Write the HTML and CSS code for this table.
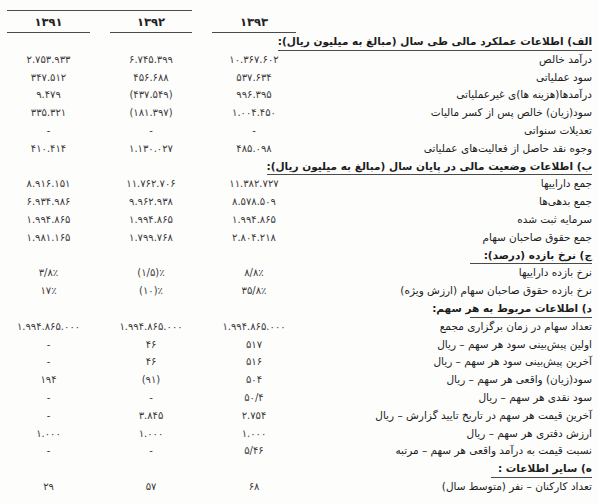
FILE: index.html
```html
<!DOCTYPE html>
<html lang="fa">
<head>
<meta charset="utf-8">
<title>خلاصه اطلاعات مالی</title>
<link rel="stylesheet" href="styles.css">
</head>
<body>
<main class="sheet" dir="rtl">
  <div class="years">
    <div class="topline"></div>
    <div class="year-spacer"></div>
    <div class="year">۱۳۹۳</div>
    <div class="year">۱۳۹۲</div>
    <div class="year">۱۳۹۱</div>
  </div>

  <div class="row sec sec-a"><div class="label">الف) اطلاعات عملکرد مالی طی سال (مبالغ به میلیون ریال):</div></div>
  <div class="row"><div class="label">درآمد خالص</div><div class="num">۱۰.۳۶۷.۶۰۲</div><div class="num">۶.۷۴۵.۳۹۹</div><div class="num">۲.۷۵۳.۹۳۳</div></div>
  <div class="row"><div class="label">سود عملیاتی</div><div class="num">۵۳۷.۶۳۴</div><div class="num">۴۵۶.۶۸۸</div><div class="num">۳۴۷.۵۱۲</div></div>
  <div class="row"><div class="label">درآمدها(هزینه ها)ی غیرعملیاتی</div><div class="num">۹۹۶.۳۹۵</div><div class="num">(۴۳۷.۵۴۹)</div><div class="num">۹.۴۷۹</div></div>
  <div class="row"><div class="label">سود(زیان) خالص پس از کسر مالیات</div><div class="num">۱.۰۰۴.۴۵۰</div><div class="num">(۱۸۱.۳۹۷)</div><div class="num">۳۳۵.۳۲۱</div></div>
  <div class="row"><div class="label">تعدیلات سنواتی</div><div class="num">-</div><div class="num">-</div><div class="num">-</div></div>
  <div class="row"><div class="label">وجوه نقد حاصل از فعالیت‌های عملیاتی</div><div class="num">۴۸۵.۰۹۸</div><div class="num">۱.۱۳۰.۰۲۷</div><div class="num">۴۱۰.۴۱۴</div></div>

  <div class="row sec sec-b"><div class="label">ب) اطلاعات وضعیت مالی در پایان سال (مبالغ به میلیون ریال):</div></div>
  <div class="row"><div class="label">جمع داراییها</div><div class="num">۱۱.۳۸۲.۷۲۷</div><div class="num">۱۱.۷۶۲.۷۰۶</div><div class="num">۸.۹۱۶.۱۵۱</div></div>
  <div class="row"><div class="label">جمع بدهی‌ها</div><div class="num">۸.۵۷۸.۵۰۹</div><div class="num">۹.۹۶۲.۹۳۸</div><div class="num">۶.۹۳۴.۹۸۶</div></div>
  <div class="row"><div class="label">سرمایه ثبت شده</div><div class="num">۱.۹۹۴.۸۶۵</div><div class="num">۱.۹۹۴.۸۶۵</div><div class="num">۱.۹۹۴.۸۶۵</div></div>
  <div class="row"><div class="label">جمع حقوق صاحبان سهام</div><div class="num">۲.۸۰۴.۲۱۸</div><div class="num">۱.۷۹۹.۷۶۸</div><div class="num">۱.۹۸۱.۱۶۵</div></div>

  <div class="row sec sec-c"><div class="label">ج) نرخ بازده (درصد):</div></div>
  <div class="row"><div class="label">نرخ بازده داراییها</div><div class="num">۸/۸٪</div><div class="num">(۱/۵)٪</div><div class="num">۳/۸٪</div></div>
  <div class="row"><div class="label">نرخ بازده حقوق صاحبان سهام (ارزش ویژه)</div><div class="num">۳۵/۸٪</div><div class="num">(۱۰)٪</div><div class="num">۱۷٪</div></div>

  <div class="row sec sec-c"><div class="label">د) اطلاعات مربوط به هر سهم:</div></div>
  <div class="row"><div class="label">تعداد سهام در زمان برگزاری مجمع</div><div class="num">۱.۹۹۴.۸۶۵.۰۰۰</div><div class="num">۱.۹۹۴.۸۶۵.۰۰۰</div><div class="num">۱.۹۹۴.۸۶۵.۰۰۰</div></div>
  <div class="row"><div class="label">اولین پیش‌بینی سود هر سهم – ریال</div><div class="num">۵۱۷</div><div class="num">۴۶</div><div class="num">-</div></div>
  <div class="row"><div class="label">آخرین پیش‌بینی سود هر سهم – ریال</div><div class="num">۵۱۶</div><div class="num">۴۶</div><div class="num">-</div></div>
  <div class="row"><div class="label">سود(زیان) واقعی هر سهم – ریال</div><div class="num">۵۰۴</div><div class="num">(۹۱)</div><div class="num">۱۹۴</div></div>
  <div class="row"><div class="label">سود نقدی هر سهم – ریال</div><div class="num">۵۰/۴</div><div class="num">-</div><div class="num">-</div></div>
  <div class="row"><div class="label">آخرین قیمت هر سهم در تاریخ تایید گزارش – ریال</div><div class="num">۲.۷۵۴</div><div class="num">۳.۸۴۵</div><div class="num">-</div></div>
  <div class="row"><div class="label">ارزش دفتری هر سهم – ریال</div><div class="num">۱.۰۰۰</div><div class="num">۱.۰۰۰</div><div class="num">۱.۰۰۰</div></div>
  <div class="row"><div class="label">نسبت قیمت به درآمد واقعی هر سهم – مرتبه</div><div class="num">۵/۴۶</div><div class="num">-</div><div class="num">-</div></div>

  <div class="row sec sec-e"><div class="label">ه) سایر اطلاعات :</div></div>
  <div class="row"><div class="label">تعداد کارکنان – نفر (متوسط سال)</div><div class="num">۶۸</div><div class="num">۵۷</div><div class="num">۲۹</div></div>
</main>
</body>
</html>
```

FILE: styles.css
```css
* { box-sizing: border-box; }

html, body {
  margin: 0;
  padding: 0;
  background: #fdfdfc;
}

.sheet {
  padding: 10px 7px 0 7px;
  font-family: "DejaVu Sans", sans-serif;
  color: #1c1c1c;
}

.years,
.row {
  display: grid;
  grid-template-columns: 1fr 84px 82px 83px;
  column-gap: 20px;
}

.topline {
  grid-row: 1;
  grid-column: 3 / 5;
  height: 1px;
  background: #4a4a4a;
}

.year-spacer { grid-row: 2; grid-column: 1; }

.year {
  grid-row: 2;
  height: 22px;
  line-height: 22px;
  text-align: center;
  font-weight: bold;
  font-size: 11.5px;
  color: #222;
  border-bottom: 1px solid #4a4a4a;
}

.row {
  height: 17.8px;
  align-items: stretch;
}

.label {
  font-size: 10.5px;
  line-height: 17.8px;
  white-space: nowrap;
  text-align: right;
}

.num {
  direction: ltr;
  text-align: center;
  font-size: 10px;
  line-height: 17.8px;
  color: #3a3a3a;
  white-space: nowrap;
}

.sec .label {
  font-weight: bold;
  line-height: 16.8px;
  border-bottom: 1px solid #4a4a4a;
}

.sec-a .label { margin-left: -4px; }
.sec-b .label { margin-left: -10px; }
.sec-c .label { justify-self: start; width: 122px; }
.sec-e .label { justify-self: start; width: 101px; }
```
